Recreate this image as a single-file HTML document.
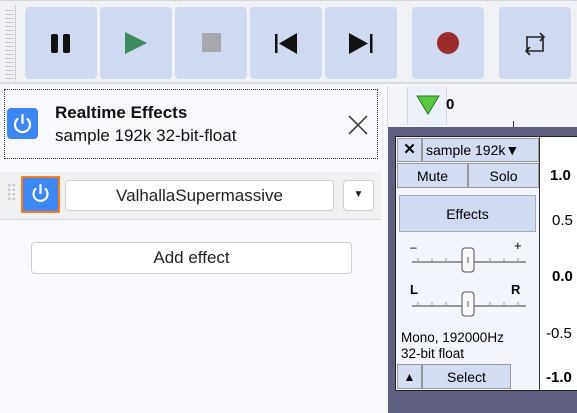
<!DOCTYPE html><html><head><style>
*{box-sizing:border-box;margin:0;padding:0}
body{width:577px;height:413px;overflow:hidden;background:#f4f5f9;font-family:"Liberation Sans",sans-serif;position:relative}
.a{position:absolute}
.tb{left:0;top:0;width:577px;height:84px;background:#f1f2f6;border-top:1px solid #d8d8dc;border-bottom:2px solid #dcdce0}
.btn{position:absolute;top:6px;height:72px;width:72px;background:#cfdaf0;border-radius:4px}
.btn svg{position:absolute;left:0;top:0}
.lp{left:0;top:86px;width:387px;height:327px;background:#f8f9fd}
.bt{background:#fff;border:1px solid #cfcfd4;border-radius:4px;text-align:center;font-size:17px;color:#222}
</style></head><body>
<div class="a tb">
 <div class="a" style="left:5px;top:6px;width:9px;height:72px;background:repeating-linear-gradient(#f1f2f6 0 3px,#c8c8cc 3px 4px)"></div>
 <div class="a" style="left:15px;top:4px;width:1px;height:76px;background:#d0d0d4"></div>
 <div class="btn" style="left:25px"><svg width="72" height="72"><rect x="26" y="27" width="7" height="19" rx="2" fill="#111"/><rect x="38" y="27" width="7" height="19" rx="2" fill="#111"/></svg></div>
 <div class="btn" style="left:100px"><svg width="72" height="72"><path d="M25 25 L47 36 L25 47Z" fill="#3c8a60"/></svg></div>
 <div class="btn" style="left:175px"><svg width="72" height="72"><rect x="27" y="26" width="19" height="19" fill="#a6a8ae"/></svg></div>
 <div class="btn" style="left:250px"><svg width="72" height="72"><rect x="25" y="27" width="2.5" height="19" fill="#111"/><path d="M47 26 L29 36.5 L47 47Z" fill="#111"/></svg></div>
 <div class="btn" style="left:325px"><svg width="72" height="72"><rect x="45" y="27" width="2.5" height="19" fill="#111"/><path d="M24 26 L43 36.5 L24 47Z" fill="#111"/></svg></div>
 <div class="btn" style="left:412px"><svg width="72" height="72"><circle cx="36" cy="36" r="11" fill="#9a2c2c"/></svg></div>
 <div class="btn" style="left:499px"><svg width="72" height="72"><path d="M28 45 V30 H45 M41 26 L45 30 L41 34 M44 30 V44 H27 M31 48 L27 44 L31 40" fill="none" stroke="#222" stroke-width="1.6"/></svg></div>
</div>
<div class="a lp">
 <div class="a" style="left:4px;top:3px;width:374px;height:70px;border:1px dotted #333"></div>
 <div class="a" style="left:7px;top:22px;width:31px;height:31px;background:#3d87f5;border-radius:4px"><svg width="31" height="31"><path d="M10.5 11 A7.5 7.5 0 1 0 20.5 11" fill="none" stroke="#fff" stroke-width="2.2" stroke-linecap="round"/><line x1="15.5" y1="7" x2="15.5" y2="15" stroke="#fff" stroke-width="2.2" stroke-linecap="round"/></svg></div>
 <div class="a" style="left:55px;top:17px;font-size:17px;font-weight:bold;color:#111">Realtime Effects</div>
 <div class="a" style="left:55px;top:40px;font-size:17px;color:#111">sample 192k 32-bit-float</div>
 <svg class="a" style="left:347px;top:28px" width="22" height="22"><path d="M2 2 L20 20 M20 2 L2 20" stroke="#444" stroke-width="1.6"/></svg>
 <div class="a" style="left:0;top:86px;width:381px;height:48px;background:#f1f1f4;border-bottom:1px solid #d8d8dc"></div>
 <div class="a" style="left:7px;top:97px;width:9px;height:18px;background:radial-gradient(circle,#c8c8cc 1.2px,transparent 1.5px) 0 0/4.5px 4.5px"></div>
 <div class="a" style="left:21px;top:90px;width:39px;height:37px;border:2px solid #ff7b1a;background:#3d87f5;border-radius:1px"><svg width="35" height="33"><path d="M12.5 11 A7 7 0 1 0 22.5 11" fill="none" stroke="#fff" stroke-width="2.2" stroke-linecap="round"/><line x1="17.5" y1="7" x2="17.5" y2="15" stroke="#fff" stroke-width="2.2" stroke-linecap="round"/></svg></div>
 <div class="a bt" style="left:65px;top:94px;width:269px;height:31px;line-height:29px">ValhallaSupermassive</div>
 <div class="a bt" style="left:343px;top:94px;width:31px;height:31px;line-height:28px;font-size:10px">▼</div>
 <div class="a bt" style="left:31px;top:156px;width:321px;height:32px;line-height:30px">Add effect</div>
</div>
<div class="a" style="left:387px;top:86px;width:1px;height:41px;background:#d6d6da"></div>
<div class="a" style="left:407px;top:87px;width:40px;height:38px;background:#edf1fa;border-left:1px solid #d6d6da;border-right:1px solid #d6d6da"></div>
<svg class="a" style="left:415px;top:94px" width="26" height="22"><path d="M2 2 L24 2 L13 20Z" fill="#55c840" stroke="#2c7a22" stroke-width="1"/></svg>
<div class="a" style="left:446px;top:96px;font-size:15px;font-weight:bold">0</div>
<div class="a" style="left:513px;top:121px;width:1px;height:6px;background:#333"></div>
<div class="a" style="left:388px;top:127px;width:189px;height:286px;background:#5f6080"></div>
<div class="a" style="left:395px;top:136px;width:182px;height:255px;background:#fff;border:1px solid #222;border-right:none"></div>
<div class="a" style="left:396px;top:137px;width:144px;height:253px;background:#f3f5fc;border-right:1px solid #333"></div>
<div class="a" style="left:397px;top:138px;width:25px;height:24px;background:#d3dcf0;border:1px solid #999;font-size:15px;font-weight:bold;text-align:center;line-height:22px">✕</div>
<div class="a" style="left:422px;top:138px;width:117px;height:24px;background:#d3dcf0;border:1px solid #999;font-size:14px;line-height:22px;padding-left:3px">sample 192k▼</div>
<div class="a" style="left:397px;top:163px;width:71px;height:25px;background:#d3dcf0;border:1px solid #999;font-size:14px;text-align:center;line-height:24px">Mute</div>
<div class="a" style="left:468px;top:163px;width:71px;height:25px;background:#d3dcf0;border:1px solid #999;font-size:14px;text-align:center;line-height:24px">Solo</div>
<div class="a" style="left:399px;top:195px;width:137px;height:37px;background:#d0dbf1;border:1px solid #aab;font-size:14px;text-align:center;line-height:36px">Effects</div>
<svg class="a" style="left:410px;top:240px" width="120" height="80">
<text x="0" y="11" font-size="12" font-family="Liberation Sans">–</text><text x="104" y="10" font-size="13" font-family="Liberation Sans">+</text>
<line x1="2" y1="22" x2="116" y2="22" stroke="#999" stroke-width="2"/>
<g stroke="#999"><line x1="8" y1="18" x2="8" y2="21"/><line x1="22" y1="18" x2="22" y2="21"/><line x1="36" y1="18" x2="36" y2="21"/><line x1="80" y1="18" x2="80" y2="21"/><line x1="94" y1="18" x2="94" y2="21"/><line x1="108" y1="18" x2="108" y2="21"/></g>
<rect x="52" y="8" width="12" height="24" rx="3" fill="#f8f8f8" stroke="#555"/><line x1="58" y1="17" x2="58" y2="23" stroke="#555"/>
<text x="0" y="54" font-size="13" font-weight="bold" font-family="Liberation Sans">L</text><text x="101" y="54" font-size="13" font-weight="bold" font-family="Liberation Sans">R</text>
<line x1="2" y1="66" x2="116" y2="66" stroke="#999" stroke-width="2"/>
<g stroke="#999"><line x1="8" y1="62" x2="8" y2="65"/><line x1="22" y1="62" x2="22" y2="65"/><line x1="36" y1="62" x2="36" y2="65"/><line x1="80" y1="62" x2="80" y2="65"/><line x1="94" y1="62" x2="94" y2="65"/><line x1="108" y1="62" x2="108" y2="65"/></g>
<rect x="52" y="52" width="12" height="24" rx="3" fill="#f8f8f8" stroke="#555"/><line x1="58" y1="61" x2="58" y2="67" stroke="#555"/>
</svg>
<div class="a" style="left:401px;top:330px;font-size:13.5px;line-height:16px">Mono, 192000Hz<br>32-bit float</div>
<div class="a" style="left:397px;top:364px;width:25px;height:25px;background:#d3dcf0;border:1px solid #999;font-size:12px;text-align:center;line-height:24px">▲</div>
<div class="a" style="left:422px;top:364px;width:89px;height:25px;background:#d3dcf0;border:1px solid #999;font-size:14px;text-align:center;line-height:24px">Select</div>
<div class="a" style="left:550px;top:167px;font-size:15px;font-weight:bold">1.0</div>
<div class="a" style="left:552px;top:212px;font-size:15px">0.5</div>
<div class="a" style="left:552px;top:268px;font-size:15px;font-weight:bold">0.0</div>
<div class="a" style="left:546px;top:325px;font-size:15px">-0.5</div>
<div class="a" style="left:546px;top:369px;font-size:15px;font-weight:bold">-1.0</div>
</body></html>
